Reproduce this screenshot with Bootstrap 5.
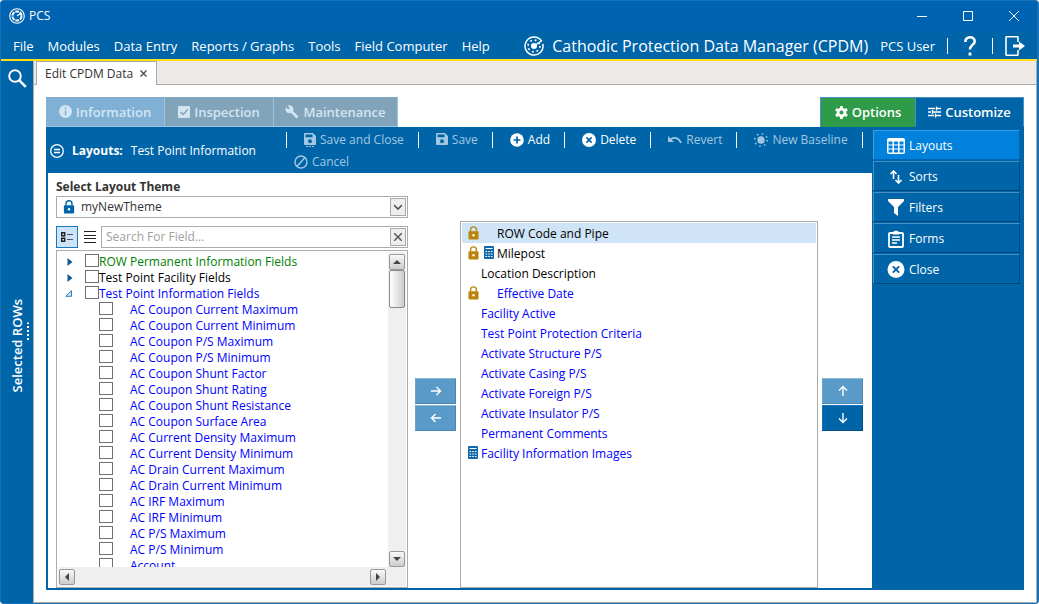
<!DOCTYPE html>
<html lang="en">
<head>
<meta charset="utf-8">
<meta name="viewport" content="width=device-width, initial-scale=1">
<title>PCS</title>
<link href="https://cdn.jsdelivr.net/npm/bootstrap@5.3.0/dist/css/bootstrap.min.css" rel="stylesheet">
<style>
:root{--blue:#0064a8;--title:#0063b1;--line:#ababab;}
body{font-family:"Open Sans","Noto Sans",sans-serif;font-size:12px;line-height:16px;color:#333;background:#fff}
button,input,select{font:inherit;color:inherit;border-radius:0}
button{background:none;border:0;padding:0}
svg{display:block;flex:none}
a{color:inherit;text-decoration:none}
.window{height:100vh;border-radius:4px;background:var(--blue);border:1px solid #1571b9;border-right-width:2px}
.titlebar{height:30px;background:var(--title);color:#fff;padding:0 8px}
.titlebar .caption{width:46px;height:30px}
.menubar{height:28px;background:var(--blue);color:#fff;font-size:13px;padding:2px 12px 0}
.menubar .links{gap:14px}
.menubar .brand{font-size:16px}
.vline{width:1px;height:16px;background:#fff}
.rule{height:2px;background:#ffde17}
.rail{width:32px;color:#fff;padding-top:8px;background:var(--blue)}
.rail-label{writing-mode:vertical-rl;transform:rotate(180deg);font-size:13px;font-weight:600}
.grip{width:2px;height:19px;background:repeating-linear-gradient(#fff 0 2px,transparent 2px 4px)}
.work{border:1px solid var(--line);border-top:0;background:#fff;min-width:0}
.doc-tabs{height:24px;background:#ece9e7}
.doc-tabs .fill{border-bottom:1px solid var(--line)}
.doc-tab{width:121px;background:#fff;border:1px solid var(--line);border-bottom:0;padding:1px 9px 0 8px}
.doc-tabs .lead-in{width:2px;border-bottom:1px solid var(--line)}
.page{padding:12px}
.mod-tab{height:30px;font-size:13px;font-weight:600;color:#d3e5f3;background:#82a4ba;border:1px solid #9cc3e0;border-left-width:0;border-top-color:#80a9c6}
.mod-tab.on{background:#80b1d5}
.mod-tab.opt{background:#2f9a47;color:#fff;border:1px solid #4592c6;border-width:1px 0 0 1px}
.mod-tab.cus{background:var(--blue);color:#fff;border:1px solid #4592c6;border-bottom-color:var(--blue)}
.frame{background:var(--blue);border:solid var(--blue);border-width:0 0 2px 2px}
.head{height:46px;color:#fff}
.head .where{width:238px;padding:2px 0 0 2px}
.tools{padding-top:5px}
.tool{height:22px;padding:0 14px 0 17px;color:#fff}
.tool:disabled{color:#a3c7e2}
.side{width:152px;padding:3px 4px 0 1px}
.side button{height:30px;margin-bottom:1px;color:#fff;background:var(--blue);border:1px solid;border-color:#4790c5 #00457a #00457a #4790c5;padding:2px 0 0 13px}
.side button.active{background:#0081dc;border-color:#3b9ce2 #0064b0 #0064b0 #3b9ce2}
.box{border:1px solid var(--line);background:#fff}
.pick{width:352px;padding-top:5px}
.pick .cap{font-weight:700;line-height:18px}
.combo{height:22px;margin-bottom:8px}
.combo select{appearance:none;border:0;outline:0;background:none;padding:1px 20px 0 4px}
.combo svg.key,.key{color:var(--blue)}
.sq{width:16px;height:18px;border:1px solid #a9a9a9;background:#eee;margin-right:1px;color:#555}
.finder{margin-bottom:2px}
.toggle{width:22px;height:22px}
.toggle.flat{width:16px}
.toggle.active{background:#cde3fa;border:1px solid #1a78c2}
.search{width:307px}
.search input{border:0;outline:0;padding:1px 4px 0;min-width:0;background:none}
.search input::placeholder{color:#a0a0a0;opacity:1}
.tree{padding:1px}
.tree ul{padding:2px 0 0 0;margin:0;list-style:none}
.tree li{height:16px;white-space:nowrap}
.tree input{appearance:none;width:14px;height:13px;border:1px solid #707070;background:#fff;margin:0}
.twist{width:27px;padding:4px 0 0 9px}
.twist.open{padding-left:7px}
.kid{padding-left:41px}
.kid label{padding-left:17px}
.g{color:#008000}.k{color:#000}.b{color:#00f}
.gold{color:#b8860b}
.track{background:#efefef}
.vs{width:18px;padding:2px 1px 0}
.hs{height:19px;padding:0 1px}
.sb{width:16px;height:16px;border:1px solid #999;border-radius:2px;background:linear-gradient(#f9f9f9,#ccc);color:#444}
.thumb{width:16px;height:38px;border:1px solid #8a8a8a;border-radius:2px;background:linear-gradient(90deg,#fff,#ccc)}
.movers{width:41px;padding-top:48px;gap:1px}
.movers.mid{margin:0 4px 0 7px}
.movers.end{margin:0 1px 0 4px}
.mover{height:26px;background:#0064a8;color:#fff;border:1px solid;border-color:#1571b9 #004f87 #004f87 #1571b9}
.mover:disabled{background:#5a9ac8;border-color:#8bb9da #4b86b3 #4b86b3 #6ba5cf}
.chosen{margin-top:48px;padding:1px}
.chosen li{height:20px;padding:2px 0 0 3px}
.chosen li.sel{background:#cfe4f6}
.slot{width:16px;padding-left:3px}
.slot svg{margin-top:-2px}
.r90{transform:rotate(90deg)}.r180{transform:rotate(180deg)}.r270{transform:rotate(270deg)}
.w1{width:119px}.w2{width:109px}.w3{width:124px}.w4{width:95px}
</style>
</head>
<body>
<svg width="0" height="0" class="position-absolute" aria-hidden="true">
<defs>
<symbol id="lock" viewBox="0 0 12 15"><path d="M2.8 6V4a3.2 3.2 0 0 1 6.4 0v2" fill="none" stroke="currentColor" stroke-width="1.5"/><rect x=".5" y="5.5" width="11" height="9" rx="1" fill="currentColor"/><circle cx="6" cy="10" r="1.3" fill="#fff"/></symbol>
<symbol id="calc" viewBox="0 0 10 13"><rect width="10" height="13" rx="1" fill="#1268a8"/><path d="M1.5 2.5h7M1.5 5.5h1.6M4.2 5.5h1.6M6.9 5.5h1.6M1.5 8h1.6M4.2 8h1.6M6.9 8h1.6M1.5 10.5h1.6M4.2 10.5h1.6M6.9 10.5h1.6" stroke="#fff" stroke-width="1.2"/></symbol>
<symbol id="right" viewBox="0 0 12 12"><path d="M1 6h9.5M6.5 2l4 4-4 4" fill="none" stroke="currentColor" stroke-width="1.4"/></symbol>
<symbol id="floppy" viewBox="0 0 12 12"><path fill="currentColor" fill-rule="evenodd" d="M1 0h8l3 3v8a1 1 0 0 1-1 1H1a1 1 0 0 1-1-1V1a1 1 0 0 1 1-1zM1.5 1.5v2.7h7V1.5zM6 6.3a2 2 0 1 0 0 4 2 2 0 0 0 0-4z"/></symbol>
<symbol id="xcirc" viewBox="0 0 14 14"><circle cx="7" cy="7" r="7" fill="currentColor"/><path d="M4.4 4.4l5.2 5.2M9.6 4.4L4.4 9.6" stroke="#0064a8" stroke-width="1.6"/></symbol>
<symbol id="tri" viewBox="0 0 8 8"><path d="M0 6l4-4 4 4z" fill="currentColor"/></symbol>
<symbol id="twist" viewBox="0 0 6 8"><path d="M.5 0L5.5 4l-5 4z" fill="#0a5c9c"/></symbol>
</defs>
</svg>
<div class="window d-flex flex-column overflow-hidden">
<header>
<div class="titlebar d-flex align-items-center pe-0">
<svg width="16" height="16" viewBox="0 0 16 16" fill="none" stroke="#fff"><circle cx="8" cy="8" r="7.3" stroke-width="1.1"/><circle cx="8" cy="8" r="4.6" stroke-width="2" stroke-dasharray="3.9 .92"/><path d="M8 8l4-3" stroke-width="1.200"/></svg>
<span class="ms-1 me-auto">PCS</span>
<button class="caption d-flex align-items-center justify-content-center" aria-label="Minimize"><svg width="10" height="10"><path d="M0 5.500h10" stroke="#fff"/></svg></button>
<button class="caption d-flex align-items-center justify-content-center" aria-label="Maximize"><svg width="10" height="10"><path d="M.5.5h9v9h-9z" stroke="#fff" fill="none"/></svg></button>
<button class="caption d-flex align-items-center justify-content-center" aria-label="Close window"><svg width="10" height="10"><path d="M0 0l10 10M10 0L0 10" stroke="#fff"/></svg></button>
</div>
<nav class="menubar d-flex align-items-center">
<div class="links d-flex me-auto"><a href="#">File</a><a href="#">Modules</a><a href="#">Data Entry</a><a href="#">Reports / Graphs</a><a href="#">Tools</a><a href="#">Field Computer</a><a href="#">Help</a></div>
<svg class="me-2" width="20" height="20" viewBox="0 0 20 20"><path d="M17.600 5.200A9 9 0 1 0 18.800 8" fill="none" stroke="#fff" stroke-width="1.500"/><circle cx="10" cy="10" r="5.900" fill="none" stroke="#fff" stroke-width="1.700" stroke-dasharray="1.800 2.830"/><circle cx="10" cy="10" r="3" fill="#fff"/><path d="M10 10l8-5.500" stroke="#fff" stroke-width="1.500"/></svg>
<span class="brand me-2 pe-1">Cathodic Protection Data Manager (CPDM)</span>
<span class="me-2">PCS User</span>
<span class="vline ms-1"></span>
<button class="mx-3" aria-label="Help"><svg width="12" height="20" viewBox="0 0 12 20"><path d="M1.300 6C1.300 3 3.200 1.300 6 1.300S10.700 3 10.700 5.400C10.700 8.500 6 9 6 13.600" fill="none" stroke="#fff" stroke-width="2.600"/><path d="M4.600 16.500h2.800v3H4.600z" fill="#fff"/></svg></button>
<span class="vline"></span>
<button class="ms-2 ps-1" aria-label="Log out"><svg width="20" height="20" viewBox="0 0 20 20"><path d="M13 6V1.500a.8.8 0 0 0-.8-.8H1.800a.8.8 0 0 0-.8.800v17a.8.8 0 0 0 .8.800h10.400a.8.8 0 0 0 .8-.8V14" fill="none" stroke="#fff" stroke-width="1.600"/><path d="M8 8.600h6V5.500l6 4.500-6 4.500v-3.100H8z" fill="#fff"/></svg></button>
</nav>
<div class="rule"></div>
</header>
<div class="d-flex flex-grow-1 overflow-hidden">
<aside class="rail d-flex flex-column align-items-center position-relative flex-shrink-0">
<button aria-label="Search"><svg width="19" height="19" viewBox="0 0 19 19" fill="none" stroke="#fff"><circle cx="7" cy="7" r="5.800" stroke-width="2"/><path d="M11.300 11.300l6.500 6.500" stroke-width="2.600"/></svg></button>
<button class="rail-label my-auto">Selected ROWs</button>
<span class="grip position-absolute top-50 end-0 me-1 translate-middle-y"></span>
</aside>
<main class="work flex-grow-1 d-flex flex-column">
<div class="doc-tabs d-flex"><span class="lead-in"></span>
<div class="doc-tab d-flex align-items-center justify-content-between"><span>Edit CPDM Data</span><button aria-label="Close tab"><svg width="7" height="7"><path d="M.5.5l6 6M6.500.5l-6 6" stroke="#555" stroke-width="1.500"/></svg></button></div>
<span class="fill flex-grow-1"></span></div>
<div class="page d-flex flex-column flex-grow-1 overflow-hidden">
<div class="d-flex">
<button class="mod-tab on w1 d-flex align-items-center justify-content-center gap-1"><svg width="13" height="13" viewBox="0 0 12 12"><circle cx="6" cy="6" r="6" fill="currentColor"/><path d="M6 2.300v1.600M6 5v4.500" stroke="#80b1d5" stroke-width="1.400"/></svg>Information</button>
<button class="mod-tab w2 d-flex align-items-center justify-content-center gap-1"><svg width="12" height="12" viewBox="0 0 12 12"><rect width="12" height="12" rx="1" fill="currentColor"/><path d="M2.500 6l2.600 2.500L9.800 3.600" fill="none" stroke="#82a4ba" stroke-width="1.500"/></svg>Inspection</button>
<button class="mod-tab w3 d-flex align-items-center justify-content-center gap-1 me-auto"><svg width="14" height="14" viewBox="0 0 14 14"><path d="M5.500 5.500l7 7" stroke="currentColor" stroke-width="2.600"/><path d="M1 2.200l2.200 2.200 1.500-1.500L2.400.8A4 4 0 1 1 1 2.200z" fill="currentColor"/></svg>Maintenance</button>
<button class="mod-tab opt w4 d-flex align-items-center justify-content-center gap-1"><svg width="13" height="13" viewBox="0 0 12 12"><circle cx="6" cy="6" r="3.200" fill="none" stroke="#fff" stroke-width="2.600"/><path d="M6 0v2M6 10v2M.8 3l1.700 1M9.500 8l1.700 1M.8 9l1.700-1M9.500 4l1.700-1" stroke="#fff" stroke-width="2.600"/></svg>Options</button>
<button class="mod-tab cus w2 d-flex align-items-center justify-content-center gap-1"><svg width="13" height="12" viewBox="0 0 13 12"><path d="M0 2.500h7M9 2.500h4M8.500 0.500v4M0 6h3M5 6h8M4.500 4v4M0 9.500h6M8 9.500h5M7.500 7.500v4" stroke="#fff" stroke-width="1.300"/></svg>Customize</button>
</div>
<section class="frame d-flex flex-grow-1 overflow-hidden">
<div class="d-flex flex-column flex-grow-1" style="min-width:0">
<div class="head d-flex">
<div class="where d-flex align-items-center gap-2 flex-shrink-0"><svg width="14" height="14" viewBox="0 0 14 14" fill="none" stroke="#fff"><circle cx="7" cy="7" r="6.300" stroke-width="1.300"/><path d="M4 5.500h6M4 8.500h6" stroke-width="1.300"/></svg><b>Layouts:</b><span>Test Point Information</span></div>
<div class="tools d-flex flex-wrap align-content-start flex-grow-1" role="toolbar">
<span class="vline"></span><button class="tool d-flex gap-1" disabled><svg width="12" height="16" viewBox="0 0 12 16"><use href="#floppy" y="1" width="12" height="12"/><path d="M2 14.500h8" stroke="currentColor" stroke-dasharray="2 1"/></svg>Save and Close</button>
<span class="vline"></span><button class="tool d-flex gap-1" disabled><svg width="12" height="14"><use href="#floppy" y="1" width="12" height="12"/></svg>Save</button>
<span class="vline"></span><button class="tool d-flex gap-1"><svg width="14" height="16" viewBox="0 0 14 14"><circle cx="7" cy="7" r="6.800" fill="#fff"/><path d="M7 3.500v7M3.500 7h7" stroke="#0064a8" stroke-width="1.700"/></svg>Add</button>
<span class="vline"></span><button class="tool d-flex gap-1"><svg width="14" height="16"><use href="#xcirc" y="1" width="14" height="14"/></svg>Delete</button>
<span class="vline"></span><button class="tool d-flex gap-1" disabled><svg width="14" height="16" viewBox="0 0 14 16"><path d="M2 8c4-4 9-2 11 3" fill="none" stroke="currentColor" stroke-width="1.700"/><path d="M0 4v6h6z" fill="currentColor"/></svg>Revert</button>
<span class="vline"></span><button class="tool d-flex gap-1" disabled><svg width="14" height="16" viewBox="0 0 14 16"><circle cx="7" cy="8" r="3.700" fill="currentColor"/><circle cx="7" cy="8" r="6.300" fill="none" stroke="currentColor" stroke-width="1.500" stroke-dasharray="1.500 3.450"/></svg>New Baseline</button>
<span class="vline"></span>
<button class="tool d-flex gap-1 ps-2" disabled><svg width="14" height="16" viewBox="0 0 14 16" fill="none" stroke="currentColor" stroke-width="1.400"><circle cx="7" cy="8" r="6"/><path d="M3 12.500L11 3.500"/></svg>Cancel</button>
</div></div>
<div class="d-flex flex-grow-1 bg-white overflow-hidden px-2">
<div class="pick d-flex flex-column flex-shrink-0">
<label class="cap" for="theme">Select Layout Theme</label>
<div class="box combo d-flex align-items-center position-relative flex-shrink-0"><svg class="key ms-1" width="16" height="14"><use href="#lock"/></svg><select id="theme" class="flex-grow-1"><option>myNewTheme</option></select><span class="sq d-flex align-items-center justify-content-center position-absolute end-0 pe-none"><svg width="8" height="6"><path d="M0 1l4 4 4-4" fill="none" stroke="#555" stroke-width="1.700"/></svg></span></div>
<div class="finder d-flex flex-shrink-0">
<button class="toggle active d-flex align-items-center justify-content-center" aria-label="Tree view"><svg width="12" height="10"><path d="M.7.7h3v3h-3zM.7 6.200h3v3h-3z" fill="none" stroke="#222" stroke-width="1.400"/><path d="M6 2.500h6M6 7.500h6" stroke="#555"/></svg></button>
<button class="toggle flat d-flex align-items-center justify-content-center ms-1 me-auto" aria-label="List view"><svg width="12" height="12"><path d="M0 .5h12M0 4.500h12M0 7.500h12M0 11.500h12" stroke="#222" stroke-width="1.200"/></svg></button>
<div class="box search d-flex align-items-center"><input class="flex-grow-1" type="text" placeholder="Search For Field..." aria-label="Search For Field"><button class="sq d-flex align-items-center justify-content-center" aria-label="Clear"><svg width="8" height="8"><path d="M0 0l8 8M8 0L0 8" stroke="#555" stroke-width="1.400"/></svg></button></div>
</div>
<div class="box tree d-flex flex-column flex-grow-1 overflow-hidden">
<div class="d-flex flex-grow-1 overflow-hidden">
<ul class="flex-grow-1 overflow-hidden">
<li class="d-flex g"><span class="twist"><svg width="6" height="8"><use href="#twist"/></svg></span><input type="checkbox" id="f1"><label for="f1">ROW Permanent Information Fields</label></li>
<li class="d-flex k"><span class="twist"><svg width="6" height="8"><use href="#twist"/></svg></span><input type="checkbox" id="f2"><label for="f2">Test Point Facility Fields</label></li>
<li class="d-flex b"><span class="twist open"><svg width="7" height="7"><path d="M.8 6.300h5.700V.8z" fill="#cfeafa" stroke="#2a7ab8"/></svg></span><input type="checkbox" id="f3"><label for="f3">Test Point Information Fields</label></li>
<li class="d-flex b kid"><input type="checkbox" id="c1"><label for="c1">AC Coupon Current Maximum</label></li>
<li class="d-flex b kid"><input type="checkbox" id="c2"><label for="c2">AC Coupon Current Minimum</label></li>
<li class="d-flex b kid"><input type="checkbox" id="c3"><label for="c3">AC Coupon P/S Maximum</label></li>
<li class="d-flex b kid"><input type="checkbox" id="c4"><label for="c4">AC Coupon P/S Minimum</label></li>
<li class="d-flex b kid"><input type="checkbox" id="c5"><label for="c5">AC Coupon Shunt Factor</label></li>
<li class="d-flex b kid"><input type="checkbox" id="c6"><label for="c6">AC Coupon Shunt Rating</label></li>
<li class="d-flex b kid"><input type="checkbox" id="c7"><label for="c7">AC Coupon Shunt Resistance</label></li>
<li class="d-flex b kid"><input type="checkbox" id="c8"><label for="c8">AC Coupon Surface Area</label></li>
<li class="d-flex b kid"><input type="checkbox" id="c9"><label for="c9">AC Current Density Maximum</label></li>
<li class="d-flex b kid"><input type="checkbox" id="c10"><label for="c10">AC Current Density Minimum</label></li>
<li class="d-flex b kid"><input type="checkbox" id="c11"><label for="c11">AC Drain Current Maximum</label></li>
<li class="d-flex b kid"><input type="checkbox" id="c12"><label for="c12">AC Drain Current Minimum</label></li>
<li class="d-flex b kid"><input type="checkbox" id="c13"><label for="c13">AC IRF Maximum</label></li>
<li class="d-flex b kid"><input type="checkbox" id="c14"><label for="c14">AC IRF Minimum</label></li>
<li class="d-flex b kid"><input type="checkbox" id="c15"><label for="c15">AC P/S Maximum</label></li>
<li class="d-flex b kid"><input type="checkbox" id="c16"><label for="c16">AC P/S Minimum</label></li>
<li class="d-flex b kid"><input type="checkbox" id="c17"><label for="c17">Account</label></li>
</ul>
<div class="track vs d-flex flex-column"><button class="sb d-flex align-items-center justify-content-center" aria-label="Scroll up"><svg width="8" height="8"><use href="#tri"/></svg></button><div class="thumb mb-auto"></div><button class="sb d-flex align-items-center justify-content-center" aria-label="Scroll down"><svg class="r180" width="8" height="8"><use href="#tri"/></svg></button></div>
</div>
<div class="track hs d-flex align-items-center justify-content-between flex-shrink-0 pe-3"><button class="sb d-flex align-items-center justify-content-center" aria-label="Scroll left"><svg class="r270" width="8" height="8"><use href="#tri"/></svg></button><button class="sb d-flex align-items-center justify-content-center me-1" aria-label="Scroll right"><svg class="r90" width="8" height="8"><use href="#tri"/></svg></button></div>
</div>
</div>
<div class="movers mid d-flex flex-column justify-content-center flex-shrink-0">
<button class="mover d-flex align-items-center justify-content-center" disabled aria-label="Add field"><svg width="12" height="12"><use href="#right"/></svg></button>
<button class="mover d-flex align-items-center justify-content-center" disabled aria-label="Remove field"><svg class="r180" width="12" height="12"><use href="#right"/></svg></button>
</div>
<ul class="box chosen list-unstyled flex-grow-1 mb-0">
<li class="d-flex align-items-center k sel"><span class="slot"><svg class="gold" width="11" height="14"><use href="#lock"/></svg></span><span class="slot"></span>ROW Code and Pipe</li>
<li class="d-flex align-items-center k"><span class="slot"><svg class="gold" width="11" height="14"><use href="#lock"/></svg></span><span class="slot"><svg width="10" height="13"><use href="#calc"/></svg></span>Milepost</li>
<li class="d-flex align-items-center k"><span class="slot"></span>Location Description</li>
<li class="d-flex align-items-center b"><span class="slot"><svg class="gold" width="11" height="14"><use href="#lock"/></svg></span><span class="slot"></span>Effective Date</li>
<li class="d-flex align-items-center b"><span class="slot"></span>Facility Active</li>
<li class="d-flex align-items-center b"><span class="slot"></span>Test Point Protection Criteria</li>
<li class="d-flex align-items-center b"><span class="slot"></span>Activate Structure P/S</li>
<li class="d-flex align-items-center b"><span class="slot"></span>Activate Casing P/S</li>
<li class="d-flex align-items-center b"><span class="slot"></span>Activate Foreign P/S</li>
<li class="d-flex align-items-center b"><span class="slot"></span>Activate Insulator P/S</li>
<li class="d-flex align-items-center b"><span class="slot"></span>Permanent Comments</li>
<li class="d-flex align-items-center b"><span class="slot"><svg width="10" height="13"><use href="#calc"/></svg></span>Facility Information Images</li>
</ul>
<div class="movers end d-flex flex-column justify-content-center flex-shrink-0">
<button class="mover d-flex align-items-center justify-content-center" disabled aria-label="Move up"><svg class="r270" width="12" height="12"><use href="#right"/></svg></button>
<button class="mover d-flex align-items-center justify-content-center" aria-label="Move down"><svg class="r90" width="12" height="12"><use href="#right"/></svg></button>
</div>
</div>
</div>
<aside class="side d-flex flex-column flex-shrink-0">
<button class="active d-flex align-items-center"><svg class="me-1" width="18" height="16" viewBox="0 0 18 16"><rect width="18" height="16" rx="2" fill="#fff"/><path d="M1.500 3.500h4v3h-4zM7 3.500h4v3H7zM12.500 3.500h4v3h-4zM1.500 7.500h4v3h-4zM7 7.500h4v3H7zM12.500 7.500h4v3h-4zM1.500 11.500h4v3h-4zM7 11.500h4v3H7zM12.500 11.500h4v3h-4z" fill="#0081dc"/></svg>Layouts</button>
<button class="d-flex align-items-center"><svg class="me-1" width="18" height="14" viewBox="0 0 18 14" fill="none" stroke="#fff" stroke-width="1.600"><path d="M6.500 9V1.500M3.500 4l3-3 3 3M11.500 5v7.500M8.500 10l3 3 3-3"/></svg>Sorts</button>
<button class="d-flex align-items-center"><svg class="me-1" width="18" height="17" viewBox="0 0 18 17"><path d="M1 0h16v2l-6 6v9l-4-3V8L1 2z" fill="#fff"/></svg>Filters</button>
<button class="d-flex align-items-center"><svg class="me-1" width="18" height="18" viewBox="0 0 18 18" fill="none" stroke="#fff"><rect x="2" y="3" width="14" height="14" rx="1" stroke-width="1.800"/><path d="M5 7h8M5 10h8M5 13h5" stroke-width="1.500"/><path d="M6 4a3 3 0 0 1 6 0z" fill="#fff"/></svg>Forms</button>
<button class="d-flex align-items-center"><svg class="me-1" width="18" height="17"><use href="#xcirc"/></svg>Close</button>
</aside>
</section>
</div>
</main>
</div>
</div>
<script src="https://cdn.jsdelivr.net/npm/bootstrap@5.3.0/dist/js/bootstrap.bundle.min.js"></script>
</body>
</html>
